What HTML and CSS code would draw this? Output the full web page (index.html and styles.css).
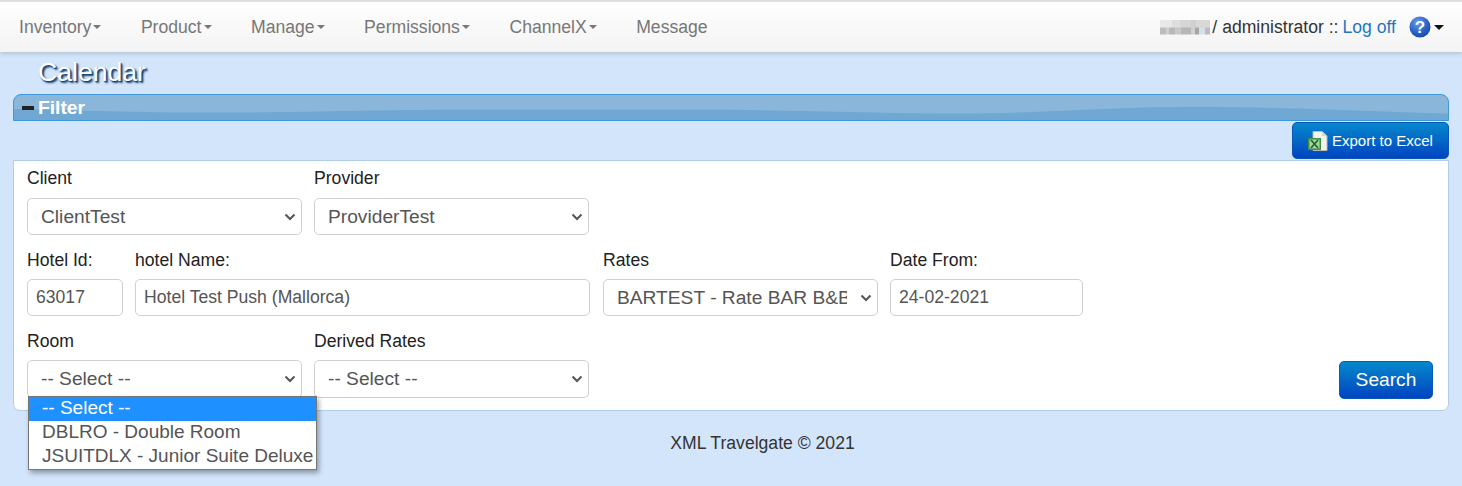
FILE: index.html
```html
<!DOCTYPE html>
<html lang="en">
<head>
<meta charset="utf-8">
<title>Calendar</title>
<link rel="stylesheet" href="styles.css">
</head>
<body>
<nav class="navbar">
  <ul class="menu">
    <li class="menu-item">Inventory<span class="caret"></span></li>
    <li class="menu-item">Product<span class="caret"></span></li>
    <li class="menu-item">Manage<span class="caret"></span></li>
    <li class="menu-item">Permissions<span class="caret"></span></li>
    <li class="menu-item">ChannelX<span class="caret"></span></li>
    <li class="menu-item">Message</li>
  </ul>
  <div class="user">
    <span class="blurred"></span>
    <span class="user-text">/ administrator ::</span>
    <a class="logoff" href="#">Log off</a>
    <svg class="help" width="22" height="22" viewBox="0 0 22 22" aria-hidden="true">
      <defs>
        <radialGradient id="helpGrad" cx="40%" cy="30%" r="75%">
          <stop offset="0" stop-color="#6f9fe8"/>
          <stop offset="0.6" stop-color="#2a62c8"/>
          <stop offset="1" stop-color="#1a45a5"/>
        </radialGradient>
      </defs>
      <circle cx="11" cy="11" r="10.5" fill="url(#helpGrad)"/>
      <text x="11" y="16.5" text-anchor="middle" class="help-mark">?</text>
    </svg>
    <span class="caret caret-dark"></span>
  </div>
</nav>

<main class="page">
  <h1 class="title">Calendar</h1>
  <div class="filter-bar">
    <svg class="wave" viewBox="0 0 1436 27" preserveAspectRatio="none" aria-hidden="true">
      <path d="M0 15 C80 17 140 19 200 19 C290 19 360 16 450 16 L717 16 C800 17 870 20 947 20 C1030 20 1090 13 1182 13 C1280 13 1360 18 1436 20 L1436 27 L0 27 Z" fill="#6fa8d3"/>
    </svg>
    <span class="minus"></span>
    <span class="filter-label">Filter</span>
  </div>
  <div class="actions">
    <button class="btn btn-export" type="button">
      <svg width="20" height="20" viewBox="0 0 20 20" aria-hidden="true">
        <path d="M5 0.5 H14 L19 5 V19.5 H5 Z" fill="#f4f4ee" stroke="#b9b9ae" stroke-width="1"/>
        <path d="M14 0.5 V5 H19 Z" fill="#d8d8d0"/>
        <rect x="0" y="7" width="13" height="12" fill="#3f8f43"/>
        <rect x="1.5" y="8.5" width="10" height="9" fill="#a9d3a4"/>
        <path d="M3 9 L10 17 M10 9 L3 17" stroke="#1f6a2c" stroke-width="1.8"/>
      </svg>
      Export to Excel
    </button>
  </div>
  <form class="card">
    <div class="row">
      <div class="field w-275">
        <label class="label">Client</label>
        <select class="control select"><option>ClientTest</option></select>
      </div>
      <div class="field w-275">
        <label class="label">Provider</label>
        <select class="control select"><option>ProviderTest</option></select>
      </div>
    </div>
    <div class="row">
      <div class="field w-96">
        <label class="label">Hotel Id:</label>
        <input class="control input" value="63017">
      </div>
      <div class="field w-455">
        <label class="label">hotel Name:</label>
        <input class="control input" value="Hotel Test Push (Mallorca)">
      </div>
      <div class="field w-275 gap-left">
        <label class="label">Rates</label>
        <select class="control select"><option>BARTEST - Rate BAR B&amp;B</option></select>
      </div>
      <div class="field w-193">
        <label class="label">Date From:</label>
        <input class="control input" value="24-02-2021">
      </div>
    </div>
    <div class="row row-last">
      <div class="field w-275 room-field">
        <label class="label">Room</label>
        <select class="control select"><option>-- Select --</option></select>
        <ul class="dropdown">
          <li class="dropdown-item is-selected">-- Select --</li>
          <li class="dropdown-item">DBLRO - Double Room</li>
          <li class="dropdown-item">JSUITDLX - Junior Suite Deluxe</li>
        </ul>
      </div>
      <div class="field w-275">
        <label class="label">Derived Rates</label>
        <select class="control select"><option>-- Select --</option></select>
      </div>
      <button class="btn btn-search" type="button">Search</button>
    </div>
  </form>
  <footer class="footer">XML Travelgate © 2021</footer>
</main>
</body>
</html>
```
FILE: styles.css
```css
* { box-sizing: border-box; }
html, body { margin: 0; padding: 0; }
body {
  height: 486px;
  overflow: hidden;
  background: #d3e5fb;
  font-family: "Liberation Sans", Arial, sans-serif;
  font-size: 17.6px;
  color: #333;
}
.navbar {
  height: 52px;
  border-top: 2px solid #dfdfe4;
  background: linear-gradient(to bottom, #ffffff, #f3f3f3);
  box-shadow: 0 1px 5px rgba(0, 0, 0, 0.2);
  display: flex;
  justify-content: space-between;
  align-items: center;
  padding: 0 18px 0 19px;
  position: relative;
}
.menu {
  list-style: none;
  margin: 0;
  padding: 0;
  display: flex;
  gap: 39.5px;
}
.menu-item { color: #777; display: flex; align-items: center; }
.caret {
  display: inline-block;
  width: 0;
  height: 0;
  margin-left: 2px;
  border-top: 4.5px solid #777;
  border-left: 4.5px solid transparent;
  border-right: 4.5px solid transparent;
}
.caret-dark { border-top-color: #111; margin-left: 3px; border-top-width: 5px; border-left-width: 5px; border-right-width: 5px; }
.user { display: flex; align-items: center; color: #333; white-space: pre; }
.blurred {
  width: 50px;
  height: 15px;
  margin-right: 2px;
  background:
    linear-gradient(to right, #e8e8e8 0 24%, #dedede 24% 40%, #d6d6d6 40% 62%, #d0d0d0 62% 72%, #d8d8d8 72% 100%) top / 100% 50% no-repeat,
    linear-gradient(to right, #bcbcbc 0 12%, #cfcfcf 12% 18%, #b8b8bc 18% 30%, #c8c8c8 30% 42%, #b6b6b6 42% 62%, #d0d0cc 62% 70%, #aca4a0 70% 78%, #d4e0e2 78% 90%, #bcbcc8 90% 100%) bottom / 100% 50% no-repeat;
}
.logoff { color: #1f76bf; text-decoration: none; margin-right: 13px; margin-left: 4px; }
.help-mark { font: bold 17px "Liberation Sans", sans-serif; fill: #fff; }
.page { padding: 0 13px; }
.title {
  margin: 5px 0 0 25px;
  height: 37px;
  font-size: 26.6px;
  line-height: 30px;
  font-weight: 400;
  color: #fff;
  text-shadow: 1px 1px 1px #123f70, 2px 2px 2px #123f70;
}
.filter-bar {
  position: relative;
  height: 27px;
  background: #8ab6da;
  border: 1px solid #3f97dc;
  border-radius: 8px 8px 0 0;
  display: flex;
  align-items: center;
  overflow: hidden;
  padding-left: 8px;
}
.wave { position: absolute; left: 0; top: 0; width: 100%; height: 100%; }
.minus { position: relative; width: 12px; height: 4px; background: #222; margin-right: 4px; }
.filter-label { position: relative; color: #fff; font-weight: 700; font-size: 19.2px; }
.actions { display: flex; justify-content: flex-end; height: 39px; padding-top: 1px; }
.btn {
  border: 1px solid #0b57b5;
  border-radius: 5px;
  background: linear-gradient(to bottom, #0588cc, #0044c0);
  color: #fff;
  font-family: inherit;
  display: inline-flex;
  align-items: center;
  justify-content: center;
}
.btn-export { width: 157px; height: 37px; font-size: 15px; gap: 4px; padding: 0 0 0 15px; justify-content: flex-start; border-radius: 5px; white-space: nowrap; }
.card {
  background: #fff;
  border: 1px solid #b0cde8;
  border-radius: 0 0 7px 7px;
  height: 251px;
  padding: 6px 15px 0 13px;
}
.row { display: flex; gap: 12px; height: 81px; }
.row-last { position: relative; height: 82px; }
.row + .row .label { line-height: 24px; }
.field { display: flex; flex-direction: column; }
.gap-left { margin-left: 1px; }
.w-275 { width: 275px; }
.w-96 { width: 96px; }
.w-455 { width: 455px; }
.w-193 { width: 193px; }
.label { height: 25px; line-height: 22px; color: #222; margin-bottom: 6px; }
.control {
  height: 37px;
  width: 100%;
  border: 1px solid #ced0d4;
  border-radius: 5px;
  background-color: #fff;
  color: #555;
  font-family: inherit;
  font-size: 19.2px;
}
.select {
  appearance: none;
  padding: 0 30px 0 13px;
  background-image: url("data:image/svg+xml,%3Csvg xmlns='http://www.w3.org/2000/svg' width='12' height='8' viewBox='0 0 12 8'%3E%3Cpath d='M1.5 1.5 L6 6 L10.5 1.5' fill='none' stroke='%23555' stroke-width='2'/%3E%3C/svg%3E");
  background-repeat: no-repeat;
  background-position: right 5px center;
}
.input { font-size: 17.6px; padding: 0 8px; }
.row-last .control { height: 38px; padding-bottom: 2px; }
.room-field { position: relative; }
.dropdown {
  position: absolute;
  left: 1px;
  top: 67px;
  width: 289px;
  margin: 0;
  padding: 0;
  list-style: none;
  background: #fff;
  border: 1px solid #767676;
  box-shadow: 2px 3px 5px rgba(0, 0, 0, 0.35);
  font-size: 19px;
  color: #555;
  z-index: 2;
}
.dropdown-item { height: 24px; line-height: 22px; padding-left: 13px; white-space: nowrap; }
.is-selected { background: #1e90ff; color: #fff; }
.btn-search { margin-left: auto; align-self: flex-start; margin-top: 32px; width: 94px; height: 38px; font-size: 19.2px; }
.footer { margin-top: 20px; padding-left: 63px; text-align: center; color: #333; line-height: 24px; }
```
